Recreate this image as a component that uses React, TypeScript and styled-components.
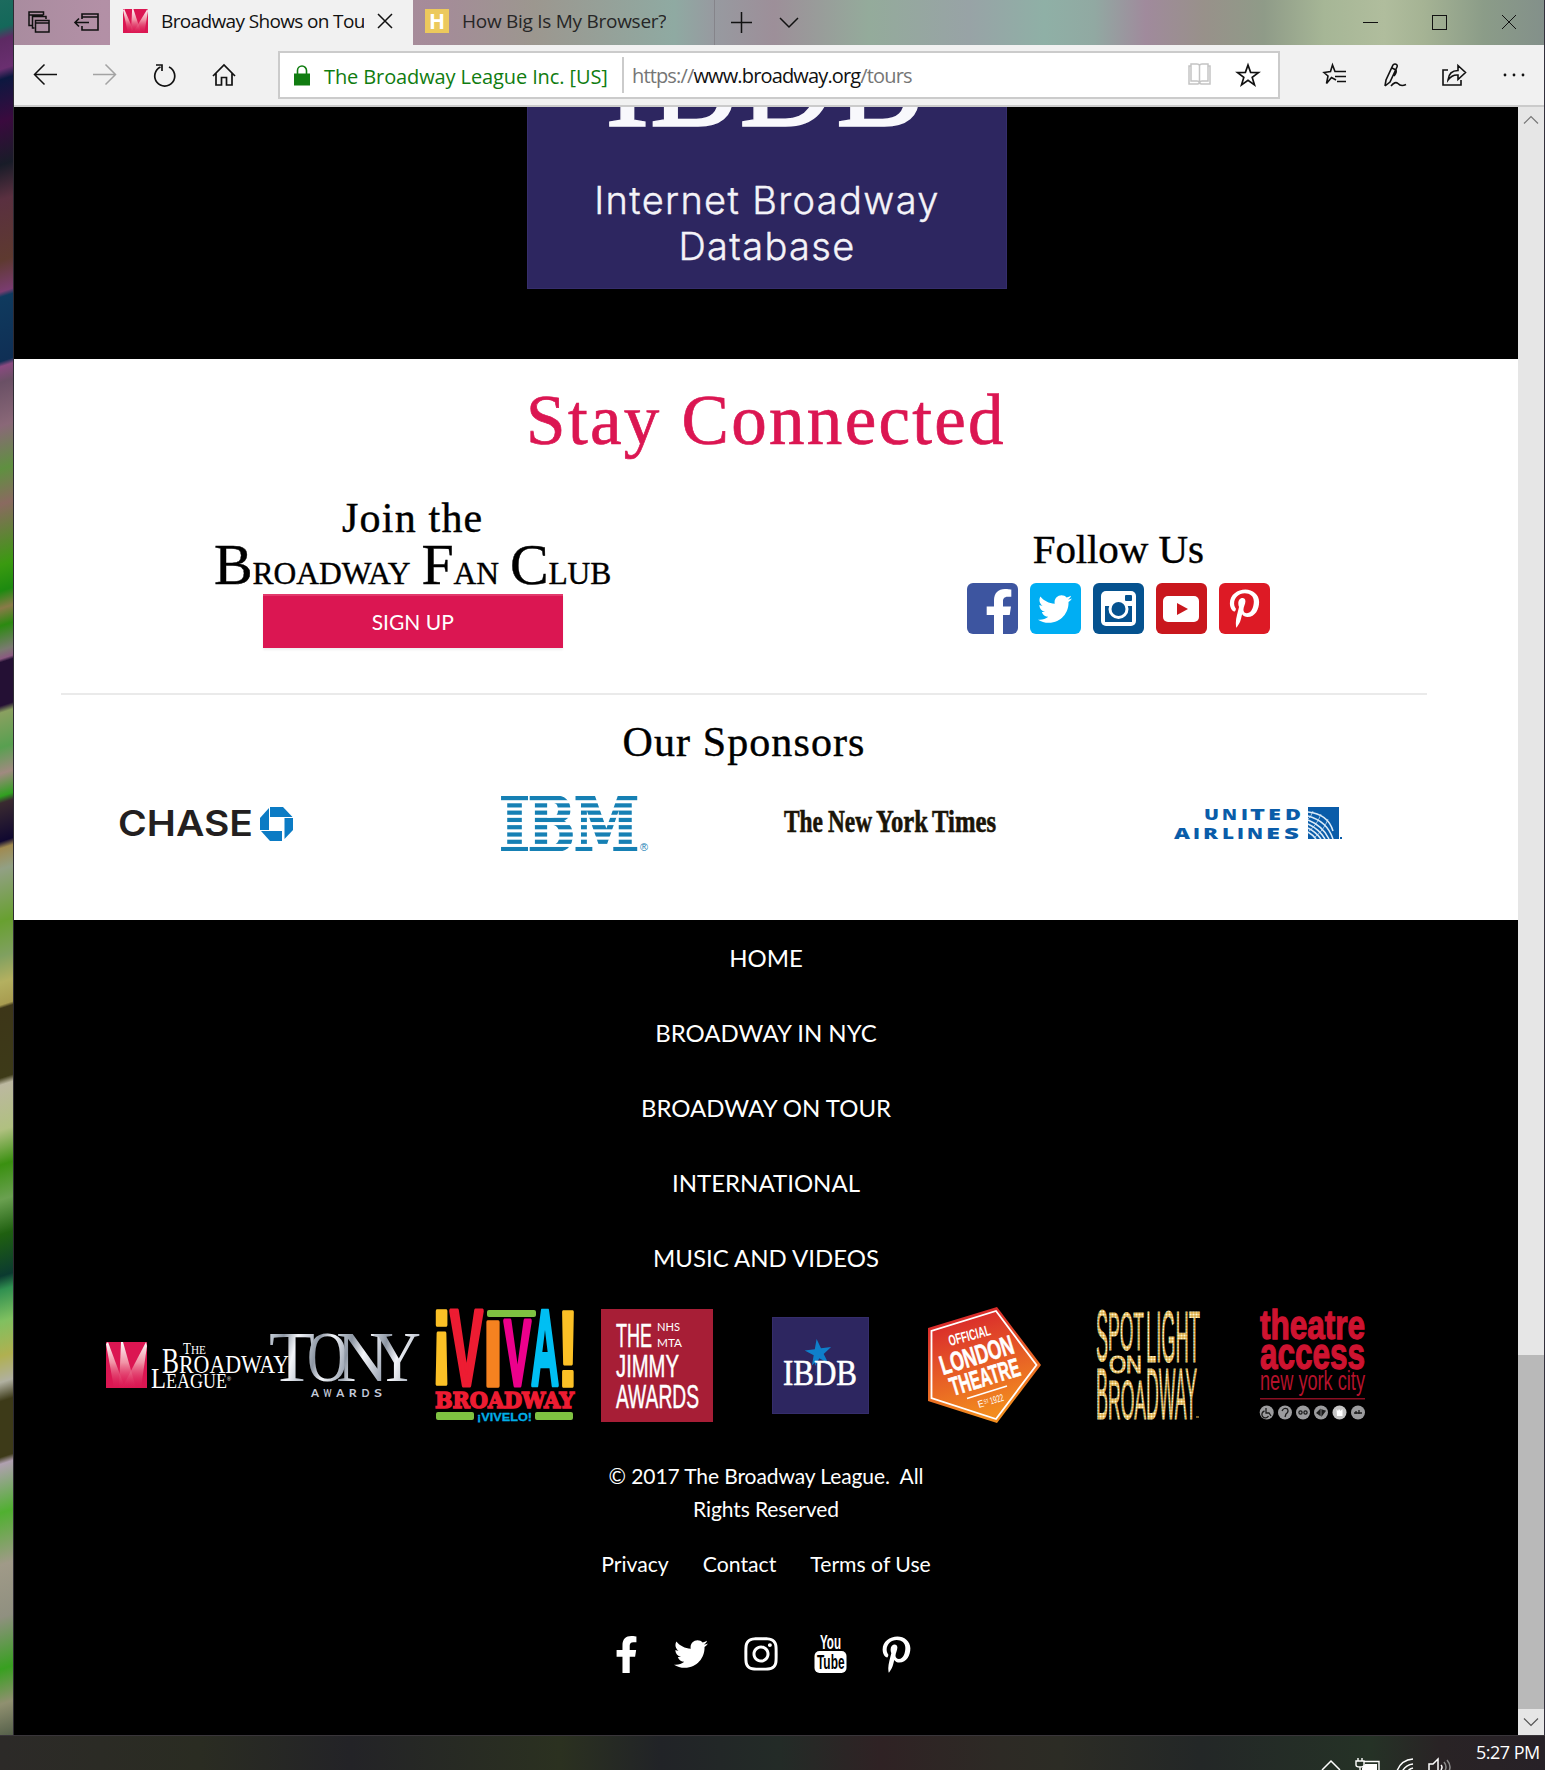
import React from "react";
import styled, { createGlobalStyle } from "styled-components";
import { FaFacebookF, FaTwitter, FaInstagram, FaPinterestP } from "react-icons/fa";

const UI = '"Open Sans", "Noto Sans", sans-serif';
const SERIF = '"Liberation Serif", serif';
const SANS = '"Liberation Sans", sans-serif';
const LATO = "Lato, sans-serif";

const GlobalStyle = createGlobalStyle`
  * { box-sizing: border-box; }
  body { margin: 0; background: #000; }
  svg { display: block; flex: none; overflow: visible; }
`;

const Screen = styled.div`
  width: 1545px;
  height: 1770px;
  overflow: hidden;
  display: flex;
  flex-direction: column;
  background: #2b2828;
`;

const Desktop = styled.div`
  height: 1735px;
  display: flex;
`;

const Wallpaper = styled.div`
  width: 14px;
  border-right: 1px solid #2e2b33;
  background: linear-gradient(
    162deg,
    #1c6b5e 0, #14685a 1.6%, #5d2a63 2.3%, #6a2f70 4%, #0c1840 4.6%, #3a0a3e 7%,
    #181c28 9.5%, #5a3040 11.5%, #5e3a30 15%, #7a3c70 16.8%, #0f3a5e 17.1%, #0f2f55 20.8%,
    #8a4a80 21.1%, #6a5065 22%, #8a6878 24.5%, #5f9040 27%, #8a6a60 29%, #3a9a10 32.5%,
    #1d8a10 34%, #8a7a48 35%, #2b8a10 36%, #7a7a70 37.4%, #8a5a80 37.9%, #241034 38.1%,
    #241034 40.6%, #8aa060 41%, #58a050 43%, #a08a80 44.5%, #30a020 45.8%, #3a2a30 46.2%,
    #100830 48.4%, #a08a50 48.8%, #92a084 50%, #68a030 53%, #80a060 55%, #b4b060 56.5%,
    #a89c50 57.8%, #3d3618 58%, #3d3a18 62%, #bcb8a0 62.4%, #b0c080 65%, #3a9010 67%,
    #6aa050 69%, #1f6010 71%, #0b3a30 73.4%, #309050 74.2%, #80c060 76%, #b0b050 78%,
    #b0b0a0 79.5%, #3d3a18 80.6%, #3d3a18 83.8%, #b0a0b0 84.2%, #50b030 87%, #a09a88 90%,
    #909080 93%, #38a020 96%, #909070 98%, #55604a 100%
  );
`;

const Window = styled.div`
  width: 1530px;
  display: flex;
  flex-direction: column;
`;

const WindowEdge = styled.div`
  width: 1px;
  background: #33303c;
`;

const TabBar = styled.div`
  height: 45px;
  display: flex;
  align-items: center;
  color: #1b1b1b;
  background: linear-gradient(
    90deg,
    #a98c9f 0, #b390a6 90px, #a58b99 420px, #9c978f 520px, #8faaa2 660px, #979aa0 700px,
    #9d8f99 760px, #94ab9b 855px, #98a3a6 955px, #8fb0a6 1030px, #91a9a2 1080px, #a08a9c 1132px,
    #98918a 1190px, #8f9b88 1250px, #a6b696 1310px, #b0bd9d 1370px, #a5b394 1410px, #8b9c88 1470px, #83908a 1530px
  );
`;

const TabTools = styled.div`
  width: 96px;
  display: flex;
  gap: 24px;
  padding: 0 0 2px 14px;
  align-items: center;
`;

const Tab = styled.div<{ $active?: boolean; $width: number }>`
  width: ${(p) => p.$width}px;
  height: 45px;
  padding: ${(p) => (p.$active ? "0 17px 3px 13px" : "0 12px 3px 12px")};
  display: flex;
  align-items: center;
  gap: 13px;
  font: 19px/30px ${UI};
  letter-spacing: ${(p) => (p.$active ? -0.64 : -0.27)}px;
  white-space: nowrap;
  color: ${(p) => (p.$active ? "#111" : "#262626")};
  background: ${(p) => (p.$active ? "#f1f1f1" : "transparent")};
  border-right: ${(p) => (p.$active ? "none" : "1px solid #85848a")};
`;

const TabTitle = styled.span<{ $width?: number }>`
  width: ${(p) => (p.$width ? `${p.$width}px` : "auto")};
  overflow: hidden;
`;

const HBadge = styled.span`
  width: 24px;
  height: 24px;
  display: grid;
  place-items: center;
  background: #ecc95c;
  color: #fff;
  font: 700 21px/24px ${UI};
  letter-spacing: 0;
`;

const TabActions = styled.div`
  display: flex;
  align-items: center;
  gap: 27px;
  padding-left: 16px;
`;

const WindowControls = styled.div`
  margin-left: auto;
  display: flex;
  gap: 54px;
  padding: 0 27px 2px 0;
`;

const Toolbar = styled.div`
  height: 62px;
  display: flex;
  align-items: center;
  background: #f1f1f1;
  border-bottom: 2px solid #cbcbcb;
  padding-left: 1px;
`;

const ToolButton = styled.div`
  width: 59.7px;
  display: flex;
  justify-content: center;
`;

const NavButtons = styled.div`
  width: 263px;
  display: flex;
`;

const AddressBar = styled.div`
  width: 1002px;
  height: 48px;
  display: flex;
  align-items: center;
  border: 2px solid #cbcbcb;
  background: #fff;
  padding: 0 18px 0 14px;
  margin-right: 25px;
  font: 20px/30px ${UI};
  white-space: nowrap;
`;

const Certificate = styled.span`
  width: 298px;
  margin-left: 14px;
  color: #107c10;
  letter-spacing: -0.11px;
  padding-top: 4px;
`;

const AddressDivider = styled.span`
  width: 2px;
  height: 36px;
  margin-right: 8px;
  background: #cbcbcb;
`;

const Url = styled.span`
  flex: 1;
  padding-top: 2px;
  color: #767676;
  letter-spacing: -0.85px;
  b { font-weight: 400; color: #111; }
`;

const AddressIcons = styled.div`
  display: flex;
  gap: 25px;
`;

const Viewport = styled.div`
  height: 1628px;
  display: flex;
`;

const Page = styled.main`
  width: 1504px;
  background: #000;
`;

const Scrollbar = styled.div`
  width: 26px;
  display: flex;
  flex-direction: column;
  background: #e6e6e6;
`;

const ScrollArrow = styled.div`
  height: 26px;
  display: grid;
  place-items: center;
`;

const ScrollThumb = styled.div`
  margin-top: auto;
  height: 354px;
  background: #b9b9b9;
`;

const Banner = styled.section`
  height: 252px;
  display: flex;
  justify-content: center;
  align-items: flex-start;
`;

const DatabaseCard = styled.div`
  width: 480px;
  height: 182px;
  overflow: hidden;
  margin-left: 2px;
  background: #2d2660;
  border: 1px solid #352d6b;
  border-top: 0;
  color: #f4f3f8;
  text-align: center;
`;

const CardText = styled.p`
  margin: 46px 0 0;
  font: 300 38px/46px Inter, sans-serif;
  letter-spacing: 1.35px;
  -webkit-text-stroke: 0.4px #f4f3f8;
`;

const Connect = styled.section`
  height: 561px;
  background: #fff;
  color: #000;
`;

const Title = styled.h2`
  margin: 0;
  padding-top: 2px;
  font: 400 71px/118px ${SERIF};
  letter-spacing: 2.3px;
  text-align: center;
  color: #db1652;
  -webkit-text-stroke: 0.7px #db1652;
`;

const Columns = styled.div`
  display: grid;
  grid-template-columns: 1fr 1fr;
  height: 214px;
  padding: 0 47px 0 46px;
`;

const Column = styled.div<{ $top: number }>`
  display: flex;
  flex-direction: column;
  align-items: center;
  padding-top: ${(p) => p.$top}px;
`;

const Heading = styled.h3<{ $line?: number; $spacing?: number; $size?: number }>`
  margin: 0;
  font: 400 ${(p) => p.$size ?? 42}px/${(p) => p.$line ?? 50}px ${SERIF};
  height: ${(p) => (p.$line ? p.$line : 48)}px;
  letter-spacing: ${(p) => p.$spacing ?? 0.5}px;
  text-align: center;
  -webkit-text-stroke: 0.4px #000;
`;

const FanClub = styled.div`
  height: 46px;
  font: 400 58px/47px ${SERIF};
  white-space: nowrap;
  word-spacing: -3px;
  letter-spacing: -0.4px;
  -webkit-text-stroke: 0.4px #000;
  span { font-size: 31.5px; line-height: 1; letter-spacing: 0; }
`;

const SignUp = styled.button`
  width: 300px;
  height: 54px;
  margin-top: 7px;
  border: 0;
  border-top: 2px solid #e23a6c;
  background: #db1652;
  box-shadow: 0 2px 2px #0001;
  color: #fff;
  font: 400 21px/50px ${LATO};
`;

const SocialTiles = styled.div`
  display: flex;
  gap: 12px;
  margin-top: 11px;
`;

const Tile = styled.div<{ $bg: string; $pad?: string }>`
  width: 51px;
  height: 51px;
  border-radius: 6px;
  display: flex;
  align-items: center;
  justify-content: center;
  padding: ${(p) => p.$pad ?? "0"};
  overflow: hidden;
  color: #fff;
  background: ${(p) => p.$bg};
`;

const Rule = styled.hr`
  width: 1366px;
  height: 2px;
  margin: 0 0 17px 47px;
  border: 0;
  background: #eaeaea;
`;

const Sponsors = styled.div`
  width: 1460px;
`;

const LogoRow = styled.div<{ $height: number; $left: number }>`
  height: ${(p) => p.$height}px;
  padding-left: ${(p) => p.$left}px;
  display: flex;
  align-items: center;
`;

const LogoSlot = styled.div<{ $before?: number }>`
  flex: none;
  margin-left: ${(p) => p.$before ?? 0}px;
`;

const Footer = styled.footer`
  height: 815px;
  color: #fff;
  font-family: ${LATO};
`;

const FooterNav = styled.nav`
  display: flex;
  flex-direction: column;
  align-items: center;
`;

const NavItem = styled.a`
  height: 75px;
  font-size: 24px;
  line-height: 75px;
`;

const Copyright = styled.p`
  margin: 24px auto 0;
  width: 330px;
  text-align: center;
  font-size: 21px;
  line-height: 33px;
  letter-spacing: -0.1px;
  white-space: pre-line;
`;

const Links = styled.div`
  display: flex;
  justify-content: center;
  gap: 34px;
  margin-top: 23px;
  font-size: 21.2px;
  line-height: 33px;
`;

const FooterSocial = styled.div`
  display: flex;
  align-items: center;
  height: 44px;
  margin: 51px 0 0 603px;
`;

const Taskbar = styled.div`
  height: 35px;
  display: flex;
  justify-content: flex-end;
  align-items: flex-start;
  padding-right: 3px;
  overflow: hidden;
  color: #fff;
  border-top: 1px solid #39353a;
  background: linear-gradient(90deg, #2c2a28 0, #2a2c22 200px, #232327 350px, #2b3120 560px, #212327 660px, #232b27 780px, #2f2224 880px, #2d2a25 1000px, #2c2c25 1060px, #232727 1200px, #253226 1370px, #292325 1440px, #272127 1545px);
`;

const TrayIcon = styled.div<{ $right: number }>`
  margin-right: ${(p) => p.$right}px;
`;

const Clock = styled.div`
  width: 66px;
  font: 18px/33px ${UI};
  letter-spacing: -0.5px;
  white-space: nowrap;
`;

type FitProps = {
  x: number;
  y: number;
  w: number;
  size: number;
  children: string;
  fill?: string;
  font?: string;
  weight?: number;
  angle?: number;
  bold?: number;
};

/** Logo lettering stretched or condensed to a given width. */
const Fit = ({ x, y, w, size, children, fill = "#fff", font = SANS, weight = 400, angle = 0, bold }: FitProps) => (
  <text
    x={x}
    y={y}
    textLength={w}
    lengthAdjust="spacingAndGlyphs"
    fontFamily={font.replace(/"/g, "'")}
    fontSize={size}
    fontWeight={weight}
    fill={fill}
    stroke={bold ? fill : undefined}
    strokeWidth={bold}
    transform={angle ? `rotate(${angle} ${x} ${y})` : undefined}
  >
    {children}
  </text>
);

type LineIconProps = { w: number; h: number; color?: string; weight?: number; children: React.ReactNode };

const LineIcon = ({ w, h, color = "#111", weight = 1.5, children }: LineIconProps) => (
  <svg width={w} height={h} viewBox={`0 0 ${w} ${h}`} fill="none" stroke={color} strokeWidth={weight}>
    {children}
  </svg>
);

const Spotlights = ({ w, h, id }: { w: number; h: number; id: string }) => (
  <svg width={w} height={h} viewBox="0 0 41 46" preserveAspectRatio="none">
    <defs>
      <linearGradient id={id} x1="0" y1="0" x2="0" y2="1">
        <stop offset="0" stopColor="#fff" />
        <stop offset="0.45" stopColor="#f4a9b4" stopOpacity="0.85" />
        <stop offset="1" stopColor="#db1652" stopOpacity="0.15" />
      </linearGradient>
    </defs>
    <rect width="41" height="46" fill="#db1652" />
    <path d="M0 2 L2 0 L19 46 H8Z" fill={`url(#${id})`} />
    <path d="M15 0 H17 L30 46 H13Z" fill={`url(#${id})`} />
    <path d="M40 0 L41 4 L35 46 H16Z" fill={`url(#${id})`} />
  </svg>
);

const starPoints = (cx: number, cy: number, r: number, turn = 0, inner = 0.4) =>
  Array.from({ length: 10 }, (_, i) => {
    const a = ((i * 36 - 90 + turn) * Math.PI) / 180;
    const q = i % 2 ? r * inner : r;
    return `${(cx + q * Math.cos(a)).toFixed(1)},${(cy + q * Math.sin(a)).toFixed(1)}`;
  }).join(" ");

const ChaseLogo = () => (
  <svg width="175" height="34" viewBox="0 0 175 34">
    <Fit x={-1} y={29} w={135} size={35} weight={600} font="Inter, sans-serif" fill="#231f20">CHASE</Fit>
    <g fill="#0b7bc4">
      <path d="M151 0 H164 L173.500 10 H151Z" />
      <path d="M165.500 11 H174 V23 L165.500 32Z" />
      <path d="M142 24 H163 V34 H151Z" />
      <path d="M141 23 V11 L150 1 V23Z" />
    </g>
    <rect x="150.500" y="10.500" width="14" height="13" fill="#fff" />
  </svg>
);

const IbmLogo = () => (
  <svg width="148" height="55" viewBox="0 0 148 55">
    <defs>
      <mask id="ibm-stripes" maskUnits="userSpaceOnUse" x="-2" y="0" width="150" height="55">
        {Array.from({ length: 8 }, (_, i) => (
          <rect key={i} x="-2" y={i * 7.28} width="150" height="4.200" fill="#fff" />
        ))}
      </mask>
    </defs>
    <g mask="url(#ibm-stripes)">
      <Fit x={-2} y={54.5} w={31} size={75} weight={700} bold={2.4} font='"DejaVu Serif", serif' fill="#1680b4">I</Fit>
      <Fit x={27} y={54.5} w={47} size={75} weight={700} bold={2.4} font='"DejaVu Serif", serif' fill="#1680b4">B</Fit>
      <Fit x={73} y={54.5} w={65} size={75} weight={700} bold={2.4} font='"DejaVu Serif", serif' fill="#1680b4">M</Fit>
    </g>
    <Fit x={139} y={55} w={8} size={10} fill="#1680b4">®</Fit>
  </svg>
);

const TimesLogo = () => (
  <svg width="214" height="34" viewBox="0 0 214 34">
    <Fit x={0} y={25} w={39} size={32} weight={700} bold={0.6} font={SERIF} fill="#1a1408">The</Fit>
    <Fit x={44} y={25} w={44} size={32} weight={700} bold={0.6} font={SERIF} fill="#1a1408">New</Fit>
    <Fit x={92} y={25} w={52} size={32} weight={700} bold={0.6} font={SERIF} fill="#1a1408">York</Fit>
    <Fit x={148} y={25} w={64} size={32} weight={700} bold={0.6} font={SERIF} fill="#1a1408">Times</Fit>
  </svg>
);

const UnitedLogo = () => (
  <svg width="170" height="33" viewBox="0 0 170 33">
    {[..."UNITED"].map((c, i) => (
      <Fit key={i} x={[30, 48, 67, 76, 94, 111][i]} y={12.5} w={[15, 15, 7, 15, 13, 16][i]} size={16.5} weight={800} font={UI} fill="#0a5ca9">{c}</Fit>
    ))}
    {[..."AIRLINES"].map((c, i) => (
      <Fit key={i} x={[0, 19, 29, 48, 63, 73, 92, 110][i]} y={32} w={[16, 7, 15, 12, 7, 16, 14, 15][i]} size={16.5} weight={800} font={UI} fill="#0a5ca9">{c}</Fit>
    ))}
    <rect x="134" width="31" height="32" fill="#0a5ca9" />
    <g fill="none" stroke="#dcebf8" strokeWidth="1.500">
      <path d="M134 5 Q154 7 159 24" />
      <path d="M134 9 Q153 14 159 32" />
      <path d="M134 13 Q149 19 155 32" />
      <path d="M134 17 Q145 22 151 32" />
      <path d="M134 21 Q142 25 147 32" />
      <path d="M134 25 Q139 28 142 32" />
      <path d="M139 4 Q137 10 134 12" strokeWidth="0.700" />
      <path d="M147 7 Q143 18 135 24" strokeWidth="0.700" />
      <path d="M154 12 Q150 23 141 30" strokeWidth="0.700" />
    </g>
    <rect x="166" y="30" width="2" height="2" fill="#0a5ca9" />
  </svg>
);

const LeagueLogo = () => (
  <svg width="184" height="46" viewBox="0 0 184 46">
    <Spotlights w={41} h={46} id="beam-logo" />
    <g>
      <Fit x={77} y={11.5} w={8} size={17} font={SERIF}>T</Fit>
      <Fit x={85} y={11.5} w={15} size={13} font={SERIF}>HE</Fit>
      <Fit x={56} y={31} w={17} size={36} font={SERIF}>B</Fit>
      <Fit x={73} y={31} w={110} size={25} font={SERIF}>ROADWAY</Fit>
      <Fit x={45} y={45.5} w={15} size={29} font={SERIF}>L</Fit>
      <Fit x={60} y={45.5} w={61} size={20} font={SERIF}>EAGUE</Fit>
      <Fit x={121} y={39} w={4} size={6}>®</Fit>
    </g>
  </svg>
);

const TonyLogo = () => (
  <svg width="150" height="65" viewBox="0 0 150 65">
    <defs>
      <linearGradient id="silver" x1="0" y1="0" x2="1" y2="0.5">
        <stop offset="0" stopColor="#dfe6ee" />
        <stop offset="0.35" stopColor="#8d96a3" />
        <stop offset="0.6" stopColor="#f4f6fa" />
        <stop offset="1" stopColor="#9ba4b2" />
      </linearGradient>
    </defs>
    <Fit x={-1} y={48} w={46} size={72} font={SERIF} fill="url(#silver)">T</Fit>
    <Fit x={37} y={48} w={41} size={71} font={SERIF} fill="url(#silver)">O</Fit>
    <Fit x={66} y={48} w={53} size={72} font={SERIF} fill="url(#silver)">N</Fit>
    <Fit x={103} y={48} w={48} size={72} font={SERIF} fill="url(#silver)">Y</Fit>
    <g>
      {[..."AWARDS"].map((c, i) => (
        <Fit key={i} x={41 + i * 12.6} y={64} w={8} size={11} weight={700} font={LATO} fill="#c4cada">{c}</Fit>
      ))}
    </g>
  </svg>
);

const VivaLogo = () => (
  <svg width="140" height="112" viewBox="0 0 140 112">
    <rect x="52" y="1" width="49" height="7" rx="2" fill="#7fc241" />
    <g strokeLinejoin="round">
      <Fit x={-4.5} y={57.5} w={22} size={105} weight={700} bold={3.6} fill="#fbc026">¡</Fit>
      <Fit x={15} y={76} w={33} size={107} weight={700} bold={5} fill="#ed1c32">V</Fit>
      <Fit x={48} y={76.5} w={20} size={92} weight={700} bold={3.6} fill="#f58220">I</Fit>
      <Fit x={69} y={76} w={27} size={92} weight={700} bold={5} fill="#ec008c">V</Fit>
      <Fit x={96} y={76} w={28} size={107} weight={700} bold={4.5} fill="#00bff3">A</Fit>
      <Fit x={122} y={76.5} w={22} size={107} weight={700} bold={3.6} fill="#fbc026">!</Fit>
    </g>
    <Fit x={0} y={98.5} w={139} size={23} weight={700} bold={1.6} font='"DejaVu Serif", serif' fill="#ed1c32">BROADWAY</Fit>
    <rect x="1" y="103" width="38" height="8" rx="2" fill="#7fc241" />
    <rect x="100" y="103" width="38" height="8" rx="2" fill="#7fc241" />
    <Fit x={42} y={111.5} w={55} size={11.5} weight={700} bold={0.3} fill="#00aee6">¡VIVELO!</Fit>
  </svg>
);

const JimmyLogo = () => (
  <svg width="112" height="113" viewBox="0 0 112 113">
    <rect width="112" height="113" fill="#a71e36" />
    <Fit x={15} y={38} w={36} size={33} bold={0.5}>THE</Fit>
    <Fit x={56} y={22} w={23} size={11} font={LATO}>NHS</Fit>
    <Fit x={56} y={38} w={25} size={11} font={LATO}>MTA</Fit>
    <Fit x={15} y={68} w={63} size={32} bold={0.5}>JIMMY</Fit>
    <Fit x={15} y={98.5} w={83} size={33} bold={0.5}>AWARDS</Fit>
  </svg>
);

const IbdbLogo = () => (
  <svg width="97" height="97" viewBox="0 0 97 97">
    <rect width="97" height="97" fill="#352d6b" />
    <rect x="1" y="1" width="95" height="95" fill="#2d2660" />
    <polygon points={starPoints(46.5, 36, 14, -8, 0.38)} fill="#0f7fca" />
    <path d="M42 38 L48 40 L43 49Z" fill="#0f7fca" />
    <Fit x={11} y={68} w={74} size={35} bold={0.6} font={SERIF}>IBDB</Fit>
  </svg>
);

const LondonLogo = () => (
  <svg width="114" height="116" viewBox="0 0 114 116">
    <defs>
      <linearGradient id="ember" x1="0" y1="0" x2="0.3" y2="1">
        <stop offset="0" stopColor="#d4182c" />
        <stop offset="0.5" stopColor="#e45328" />
        <stop offset="1" stopColor="#f28c1e" />
      </linearGradient>
    </defs>
    <polygon points="69,0 113,58 69,116 0,94 0,21" fill="url(#ember)" />
    <polygon points="68,4 108.500,58 68,112 3.500,91 3.500,24" fill="none" stroke="#fff" strokeWidth="1.800" />
    <Fit x={22} y={39} w={43} size={15} weight={700} angle={-15}>OFFICIAL</Fit>
    <Fit x={15} y={68} w={76} size={27} weight={700} bold={0.6} angle={-17}>LONDON</Fit>
    <Fit x={25} y={89} w={72} size={26} weight={700} bold={0.6} angle={-17}>THEATRE</Fit>
    <path d="M39 91.500 L79 79" stroke="#fff" strokeWidth="1.500" />
    <Fit x={51} y={101} w={6} size={10} angle={-17}>E</Fit>
    <Fit x={56.5} y={97} w={5} size={6} angle={-17}>ST</Fit>
    <Fit x={63} y={97.5} w={14} size={10} angle={-17}>1922</Fit>
  </svg>
);

const SpotlightLogo = () => (
  <svg width="104" height="110" viewBox="0 0 104 110">
    <defs>
      <pattern id="bulbs" width="3" height="3" patternUnits="userSpaceOnUse">
        <rect width="3" height="3" fill="#dcae48" />
        <circle cx="1.500" cy="1.500" r="1.100" fill="#fff6d2" />
      </pattern>
    </defs>
    <Fit x={0} y={51} w={12} size={72} fill="url(#bulbs)" weight={400} bold={1}>S</Fit>
    <Fit x={12} y={39.5} w={36} size={54} fill="url(#bulbs)" weight={400} bold={1}>POT</Fit>
    <Fit x={50} y={51.5} w={54} size={73} fill="url(#bulbs)" weight={400} bold={1}>LIGHT</Fit>
    <Fit x={13} y={63} w={33} size={23} fill="url(#bulbs)" weight={400} bold={1}>ON</Fit>
    <Fit x={0} y={108.5} w={12} size={73} fill="url(#bulbs)" weight={400} bold={1}>B</Fit>
    <Fit x={12} y={108.5} w={38} size={56} fill="url(#bulbs)" weight={400} bold={1}>ROA</Fit>
    <Fit x={50} y={108.5} w={51} size={73} fill="url(#bulbs)" weight={400} bold={1}>DWAY</Fit>
    <rect x="100" y="106" width="3" height="2" fill="#7a602a" />
  </svg>
);

const AccessLogo = () => (
  <svg width="106" height="113" viewBox="0 0 106 113">
    <Fit x={0} y={29.5} w={105} size={40} weight={700} bold={1.3} fill="#ce1330">theatre</Fit>
    <Fit x={0} y={60} w={105} size={44} weight={700} bold={1.3} fill="#ce1330">access</Fit>
    <Fit x={0} y={81} w={105} size={27} fill="#b5122b">new york city</Fit>
    <rect y="89" width="105" height="1.500" fill="#8a0f22" />
    {[6.7, 25, 43, 61, 79.5, 98].map((cx, i) => (
      <circle key={cx} cx={cx} cy="103.500" r="7" fill={i === 4 ? "#c4c4c4" : "#9c9c9e"} />
    ))}
    <g fill="none" stroke="#1c1c1c" strokeWidth="1.300">
      <path d="M6 99 V104 H9 L11 107 M4.500 102 A3.500 3.500 0 1 0 8.500 107" />
      <path d="M22 102 Q24 98 27.500 100 Q29 103 26 105 L25 108" />
      <circle cx="40.500" cy="103.500" r="1.600" />
      <circle cx="45.500" cy="103.500" r="1.600" />
      <path d="M57 104 L60 101 L60 106Z M62 101 L65 102 L62 106Z" fill="#1c1c1c" />
      <path d="M94 104 H102 M96 102 V105 M99 101 V105" />
    </g>
    <path d="M76.500 100 L78 102 L79 100 L80.500 102 L82.500 100 V107 H77Z" fill="#fff" />
  </svg>
);

const YouTubeStack = () => (
  <svg width="33" height="40" viewBox="0 0 33 40">
    <Fit x={6} y={14.5} w={21} size={19.5} weight={700}>You</Fit>
    <rect x="0.500" y="17" width="32" height="22" rx="5" fill="#fff" />
    <Fit x={3} y={35} w={27.5} size={20} weight={700} fill="#000">Tube</Fit>
  </svg>
);

const CloseIcon = ({ weight = 1.5 }: { weight?: number }) => (
  <LineIcon w={16} h={16} weight={weight}>
    <path d="M1 1 L15 15 M15 1 L1 15" />
  </LineIcon>
);

const Star = ({ w = 24 }: { w?: number }) => (
  <LineIcon w={w} h={24} weight={1.7}>
    <polygon points={starPoints(12, 13, 11)} />
  </LineIcon>
);

const navItems = ["HOME", "BROADWAY IN NYC", "BROADWAY ON TOUR", "INTERNATIONAL", "MUSIC AND VIDEOS"];

const BrowserChrome = () => (
  <>
    <TabBar>
      <TabTools>
        <LineIcon w={22} h={22} weight={1.5}>
          <path d="M5 14.500 H1 V1 H15.500 V4 M1 4 H15.500 M6.500 17 H4.500 V5.500 H18 V8" />
          <rect x="7.500" y="9.500" width="13.500" height="11.500" />
          <path d="M7.500 12 H21" />
        </LineIcon>
        <LineIcon w={25} h={18} weight={1.6}>
          <path d="M8 6 V1 H24 V17 H8 V13 M8 4 H24 M15 9.500 H1 M5 5.500 L1 9.500 L5 13.500" />
        </LineIcon>
      </TabTools>
      <Tab $active $width={303}>
        <Spotlights w={25} h={24} id="beam-tab" />
        <TabTitle $width={203}>Broadway Shows on Tour</TabTitle>
        <CloseIcon />
      </Tab>
      <Tab $width={302}>
        <HBadge>H</HBadge>
        <TabTitle>How Big Is My Browser?</TabTitle>
      </Tab>
      <TabActions>
        <LineIcon w={21} h={21}>
          <path d="M10.500 0 V21 M0 10.500 H21" />
        </LineIcon>
        <LineIcon w={20} h={12}>
          <path d="M1 1 L10 10 L19 1" />
        </LineIcon>
      </TabActions>
      <WindowControls>
        <LineIcon w={15} h={16} weight={1}>
          <path d="M0 8.500 H15" />
        </LineIcon>
        <LineIcon w={15} h={16} weight={1}>
          <rect x="0.500" y="1.500" width="14" height="14" />
        </LineIcon>
        <CloseIcon weight={1} />
      </WindowControls>
    </TabBar>
    <Toolbar>
      <NavButtons>
        <ToolButton>
          <LineIcon w={24} h={22}>
            <path d="M24 11.500 H1.500 M11.500 1.500 L1.500 11.500 L11.500 21.500" />
          </LineIcon>
        </ToolButton>
        <ToolButton>
          <LineIcon w={24} h={22} color="#a3a3a3">
            <path d="M0 11.500 H22.500 M12.500 1.500 L22.500 11.500 L12.500 21.500" />
          </LineIcon>
        </ToolButton>
        <ToolButton>
          <LineIcon w={24} h={24} weight={1.7}>
            <path d="M8.500 4 A10 10 0 1 0 17 4 M4 2 H10 V8" />
          </LineIcon>
        </ToolButton>
        <ToolButton>
          <LineIcon w={24} h={24} weight={1.7}>
            <path d="M1 13 L12 2 L23 13 M4 10.500 V22 H9.500 V14.500 H14.500 V22 H20 V10.500" />
          </LineIcon>
        </ToolButton>
      </NavButtons>
      <AddressBar>
        <svg width="16" height="21" viewBox="0 0 16 21">
          <path d="M3.500 9 V5.500 A4.500 4.500 0 0 1 12.500 5.500 V9" fill="none" stroke="#107c10" strokeWidth="1.600" />
          <rect y="8.500" width="16" height="12" fill="#107c10" />
        </svg>
        <Certificate>The Broadway League Inc. [US]</Certificate>
        <AddressDivider />
        <Url>
          https://<b>www.broadway.org</b>/tours
        </Url>
        <AddressIcons>
          <LineIcon w={23} h={22} color="#c4c4c4">
            <path d="M3 1 H9 Q11 1 11.500 2.500 Q12 1 14 1 H20 V18 H14 Q12 18 11.500 19.500 Q11 18 9 18 H3Z M11.500 2.500 V19.500 M3 3 H1 V21 H10 Q11.500 19 13 21 H22 V3 H20" />
          </LineIcon>
          <Star />
        </AddressIcons>
      </AddressBar>
      <ToolButton>
        <LineIcon w={24} h={24} weight={1.6}>
          <path d="M13 17 L8.500 14.500 L3.500 20.500 L5 13 L1 9.500 L7.500 8.500 L9.500 2 L12 8.500 H23 M12 13.500 H23 M14 18.500 H23" />
        </LineIcon>
      </ToolButton>
      <ToolButton>
        <LineIcon w={26} h={26} weight={1.6}>
          <path d="M3 24 L4 18 L11 3 Q13 1 15 3 Q15.500 4 15 5 L8 20 L3 24 M10 6 L14 8 M14 8 Q15 10 12 14 M9 24 Q13 19 16 21.500 Q19 25 24 22.500" />
        </LineIcon>
      </ToolButton>
      <ToolButton>
        <LineIcon w={25} h={24} weight={1.6}>
          <path d="M6 7 H1 V22 H19 V17 M6 17 Q7 7.500 16 7.500 V2.500 L23.500 9.500 L16 16.500 V12 Q10 11.500 6 17Z" />
        </LineIcon>
      </ToolButton>
      <ToolButton>
        <svg width="24" height="4" viewBox="0 0 24 4" fill="#111">
          <circle cx="3" cy="2" r="1.400" />
          <circle cx="12" cy="2" r="1.400" />
          <circle cx="21" cy="2" r="1.400" />
        </svg>
      </ToolButton>
    </Toolbar>
  </>
);

const StayConnected = () => (
  <Connect>
    <Title>Stay Connected</Title>
    <Columns>
      <Column $top={14}>
        <Heading $spacing={1.2}>Join the</Heading>
        <FanClub>
          B<span>ROADWAY</span> F<span>AN</span> C<span>LUB</span>
        </FanClub>
        <SignUp>SIGN UP</SignUp>
      </Column>
      <Column $top={45}>
        <Heading $size={41} $spacing={-0.1}>Follow Us</Heading>
        <SocialTiles>
          <Tile $bg="#3d55a0" $pad="7px 0 0 13px"><FaFacebookF size={46} /></Tile>
          <Tile $bg="#00aef3"><FaTwitter size={34} /></Tile>
          <Tile $bg="#05528f">
            <svg width="37" height="37" viewBox="0 0 37 37">
              <rect x="1" y="1" width="35" height="35" rx="5" fill="#fff" />
              <path d="M5 16 H10 A9 9 0 1 0 27 16 H32 V32 H5Z" fill="#05528f" />
              <circle cx="18.500" cy="19" r="10" fill="#fff" />
              <circle cx="18.500" cy="19" r="7" fill="#05528f" />
              <rect x="25" y="5" width="7" height="6" rx="1" fill="#05528f" />
            </svg>
          </Tile>
          <Tile $bg="#c9171d">
            <svg width="36" height="26" viewBox="0 0 36 26">
              <rect width="36" height="26" rx="5" fill="#fff" />
              <path d="M14 7 L25 13 L14 19Z" fill="#c9171d" />
            </svg>
          </Tile>
          <Tile $bg="#dd1a25"><FaPinterestP size={39} /></Tile>
        </SocialTiles>
      </Column>
    </Columns>
    <Rule />
    <Sponsors>
      <Heading $line={60} $spacing={1.1}>Our Sponsors</Heading>
      <LogoRow $height={103} $left={105}>
        <LogoSlot><ChaseLogo /></LogoSlot>
        <LogoSlot $before={207}><IbmLogo /></LogoSlot>
        <LogoSlot $before={135}><TimesLogo /></LogoSlot>
        <LogoSlot $before={176}><UnitedLogo /></LogoSlot>
      </LogoRow>
    </Sponsors>
  </Connect>
);

const SiteFooter = () => (
  <Footer>
    <FooterNav>
      {navItems.map((item) => (
        <NavItem key={item}>{item}</NavItem>
      ))}
    </FooterNav>
    <LogoRow $height={140} $left={92}>
      <LogoSlot><LeagueLogo /></LogoSlot>
      <LogoSlot $before={-20}><TonyLogo /></LogoSlot>
      <LogoSlot $before={15}><VivaLogo /></LogoSlot>
      <LogoSlot $before={26}><JimmyLogo /></LogoSlot>
      <LogoSlot $before={59}><IbdbLogo /></LogoSlot>
      <LogoSlot $before={59}><LondonLogo /></LogoSlot>
      <LogoSlot $before={54}><SpotlightLogo /></LogoSlot>
      <LogoSlot $before={60}><AccessLogo /></LogoSlot>
    </LogoRow>
    <Copyright>{"© 2017 The Broadway League.\u00a0 All\nRights Reserved"}</Copyright>
    <Links>
      <a>Privacy</a>
      <a>Contact</a>
      <a>Terms of Use</a>
    </Links>
    <FooterSocial>
      <LogoSlot $before={-9}><FaFacebookF size={37} /></LogoSlot>
      <LogoSlot $before={29}><FaTwitter size={34} /></LogoSlot>
      <LogoSlot $before={34}><FaInstagram size={38} /></LogoSlot>
      <LogoSlot $before={34}><YouTubeStack /></LogoSlot>
      <LogoSlot $before={31}><FaPinterestP size={37} /></LogoSlot>
    </FooterSocial>
  </Footer>
);

export default function App() {
  return (
    <Screen>
      <GlobalStyle />
      <Desktop>
        <Wallpaper />
        <Window>
          <BrowserChrome />
          <Viewport>
            <Page>
              <Banner>
                <DatabaseCard>
                  <svg width="478" height="24" viewBox="0 0 478 24">
                    <Fit x={77} y={18.5} w={320} size={150} bold={1.5} font={SERIF} fill="#f8f8fc">IBDB</Fit>
                  </svg>
                  <CardText>
                    Internet Broadway
                    <br />
                    Database
                  </CardText>
                </DatabaseCard>
              </Banner>
              <StayConnected />
              <SiteFooter />
            </Page>
            <Scrollbar>
              <ScrollArrow>
                <LineIcon w={16} h={10} color="#777" weight={1.2}>
                  <path d="M1 8.500 L8 1.500 L15 8.500" />
                </LineIcon>
              </ScrollArrow>
              <ScrollThumb />
              <ScrollArrow>
                <LineIcon w={16} h={10} color="#555" weight={1.2}>
                  <path d="M1 1.500 L8 8.500 L15 1.500" />
                </LineIcon>
              </ScrollArrow>
            </Scrollbar>
          </Viewport>
        </Window>
        <WindowEdge />
      </Desktop>
      <Taskbar>
        <TrayIcon $right={14}>
          <LineIcon w={20} h={35} color="#fff">
            <path d="M1 34 L10 25 L19 34" />
          </LineIcon>
        </TrayIcon>
        <TrayIcon $right={15}>
          <LineIcon w={26} h={35} color="#fff" weight={1.4}>
            <path d="M3 22 V25 M7 22 V25 M1 25 H9 V29 Q9 31 5 31 Q1 31 1 29Z M5 31 V36 M9 25.500 H24 V36" />
            <path d="M10 28 H22 V36 H7 V32Z" fill="#fff" stroke="none" />
          </LineIcon>
        </TrayIcon>
        <TrayIcon $right={14}>
          <LineIcon w={18} h={35} color="#fff">
            <path d="M1 35 Q5 24 17 23 M6 36 Q9 29 17 28 M11 36 Q13 33 17 32" />
          </LineIcon>
        </TrayIcon>
        <TrayIcon $right={24}>
          <LineIcon w={24} h={35} color="#fff">
            <path d="M1 37 V28 H5 L10 23 V37" />
            <path d="M13 29 Q15 31 13 34" />
            <path d="M16 26 Q20 31 16 36 M19 24 Q25 31 19 38" stroke="#8a8a8a" />
          </LineIcon>
        </TrayIcon>
        <Clock>5:27 PM</Clock>
      </Taskbar>
    </Screen>
  );
}
